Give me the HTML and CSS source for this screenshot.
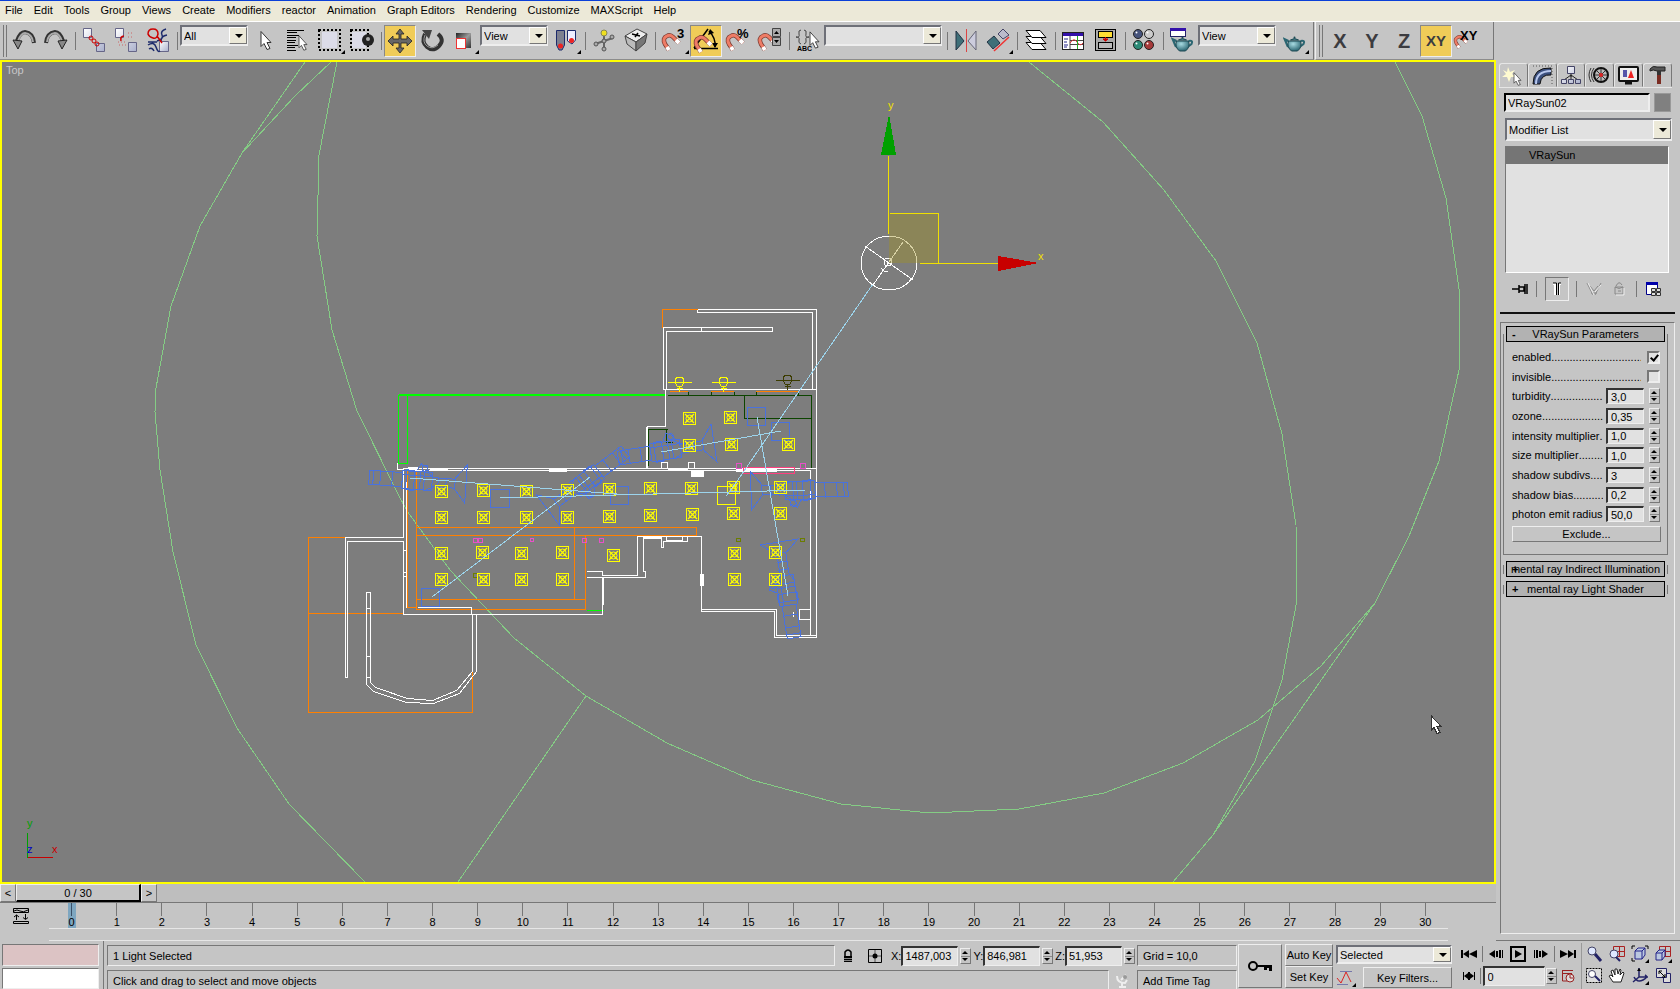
FILE: index.html
```
<!DOCTYPE html>
<html lang="en">
<head>
  <meta charset="UTF-8">
  <meta name="viewport" content="width=device-width, initial-scale=1.0">
  <title>Top viewport</title>
  <link rel="stylesheet" href="styles.css">
</head>
<body>
  <!-- shared shapes -->
  <svg class="defs" width="0" height="0">
    <defs>
      <linearGradient id="metal" x1="0" y1="0" x2="1" y2="1">
        <stop offset="0" stop-color="#222"/><stop offset=".5" stop-color="#999"/><stop offset="1" stop-color="#333"/>
      </linearGradient>
      <linearGradient id="cube" x1="0" y1="0" x2="1" y2="1">
        <stop offset="0" stop-color="#fff"/><stop offset="1" stop-color="#aab0cc"/>
      </linearGradient>
      <radialGradient id="tea" cx=".4" cy=".3" r=".7">
        <stop offset="0" stop-color="#a8dbe2"/><stop offset="1" stop-color="#2b6672"/>
      </radialGradient>
      <symbol id="magnet" viewBox="0 0 32 32">
        <path d="M11 25L7 19Q4 13 9 11Q12 9 15 12L21 18" fill="none" stroke="#7b3a30" stroke-width="4.500"/>
        <path d="M11 25L7 19Q4 13 9 11Q12 9 15 12L21 18" fill="none" stroke="#ee7c66" stroke-width="3"/>
        <path d="M11 25L9 22M21 18L18 15" stroke="#fff" stroke-width="4"/>
      </symbol>
      <symbol id="arrow" viewBox="0 0 12 20">
        <path d="M1 1V16L4 13L7 19L10 18L7 12H11Z" fill="#fff" stroke="#333"/>
      </symbol>
      <symbol id="teapot" viewBox="0 0 22 16">
        <path d="M5 5L1 3L4 10L7 12M17 5Q22 4 20 8L16 11" fill="none" stroke="#2b6672" stroke-width="2"/>
        <path d="M5 5H17Q19 11 14 15H8Q3 11 5 5Z" fill="url(#tea)" stroke="#1e4a54"/>
        <path d="M7 4Q11 1 15 4Z" fill="#5fa3ae" stroke="#1e4a54"/><circle cx="11" cy="1.500" r="1" fill="#1e4a54"/>
      </symbol>
      <symbol id="corner" viewBox="0 0 4 4"><path d="M4 0V4H0Z"/></symbol>
      <symbol id="light" viewBox="0 0 13 13">
        <path d="M.5.5H12.500V12.500H.5Z" fill="none" stroke="#ff0"/>
        <path d="M2 2L11 11M11 2L2 11" fill="none" stroke="#ff0" stroke-width="1.200" shape-rendering="geometricPrecision"/>
        <circle cx="6.500" cy="6.500" r="3.500" fill="none" stroke="#ff0" shape-rendering="geometricPrecision"/>
      </symbol>
      <g id="camera">
        <path d="M-11-5L0-19V19L-11 6ZM-34-4H-11V5H-34ZM-28-5V6M-20-5V5M-64-9H-34V9H-64ZM-60-10H-52V10H-60ZM-46-9V9M-42-9V9M-40-9L-32-4M-40 9L-32 5M-97-7H-64V7H-97ZM-93-7V7M-86-7V7M-74-8V8M-64-5H-34"/>
        <path d="M-50-10L-46-17L-40-14L-38-9M-45-13A3 3 0 1 0-39-13A3 3 0 1 0-45-13"/>
      </g>
      <g id="lamp">
        <path d="M-12 0H12M-4-3L-3-5H3L4-3V1L2 4H-2L-4 1ZM0 4V9M-3 6H3"/>
      </g>
    </defs>
  </svg>

  <nav class="menubar">
    <a href="#">File</a><a href="#">Edit</a><a href="#">Tools</a><a href="#">Group</a><a href="#">Views</a><a href="#">Create</a><a href="#">Modifiers</a><a href="#">reactor</a><a href="#">Animation</a><a href="#">Graph Editors</a><a href="#">Rendering</a><a href="#">Customize</a><a href="#">MAXScript</a><a href="#">Help</a>
  </nav>

  <div class="toolbars">
    <div class="toolbar">
      <span class="grip"></span>
      <button class="tool" aria-label="Undo"><svg viewBox="0 0 32 32"><path d="M26 18Q25 8 17 7Q12 7 9 16" fill="none" stroke="#333" stroke-width="4"/><path d="M25 17Q24 9 17 8Q13 8 10 16" fill="none" stroke="#aaa" stroke-width="2"/><path d="M5 15L14 16L10 24Z" fill="#888" stroke="#222"/></svg></button>
      <button class="tool" aria-label="Redo"><svg viewBox="0 0 32 32"><path d="M6 18Q7 8 15 7Q20 7 23 16" fill="none" stroke="#333" stroke-width="4"/><path d="M7 17Q8 9 15 8Q19 8 22 16" fill="none" stroke="#aaa" stroke-width="2"/><path d="M27 15L18 16L22 24Z" fill="#888" stroke="#222"/></svg></button>
      <span class="sep"></span>
      <button class="tool" aria-label="Link"><svg viewBox="0 0 32 32"><path d="M5.500 3.500H13.500V12.500H5.500ZM18.500 18.500H26.500V26.500H18.500Z" fill="url(#cube)" stroke="#668"/><g fill="none" stroke="#c00"><circle cx="13" cy="13" r="2"/><circle cx="16" cy="16" r="2"/><circle cx="19" cy="19" r="2"/></g></svg></button>
      <button class="tool" aria-label="Unlink"><svg viewBox="0 0 32 32"><path d="M5.500 3.500H13.500V12.500H5.500ZM18.500 17.500H26.500V26.500H18.500Z" fill="url(#cube)" stroke="#668"/><path d="M11 16Q10 11 14 11" fill="none" stroke="#c00" stroke-width="1.500"/><path d="M8 17H15M9 20H16M18 8H23M18 12H24" stroke="#c66" stroke-dasharray="1 2"/></svg></button>
      <button class="tool" aria-label="Bind to Space Warp"><svg viewBox="0 0 32 32"><path d="M17.500 16.500H26.500V26.500H17.500Z" fill="url(#cube)" stroke="#668"/><path d="M24 4Q18 6 20 10T15 16M25 10Q19 11 19 16M6 20Q12 16 14 22T18 26M7 24Q10 22 12 26M6 17H15" fill="none" stroke="#1c2a6b" stroke-width="1.500"/><path d="M6 9Q6 4 11 4T16 9Q15 14 11 13T6 9ZM15 11L20 18" fill="none" stroke="#c00" stroke-width="1.500"/></svg></button>
      <span class="sep"></span>
      <span class="combo w68"><select aria-label="Selection filter"><option>All</option></select></span>
      <button class="tool" aria-label="Select"><svg viewBox="0 0 32 32"><use href="#arrow" x="10" y="5" width="12" height="21"/></svg></button>
      <button class="tool" aria-label="Select by name"><svg viewBox="0 0 32 32"><path d="M5 5.500H22M5 7.500H15M5 10.500H17M5 12.500H14M5 15.500H14M5 17.500H13M5 20.500H16M5 22.500H13M5 25.500H14" stroke="#000"/><use href="#arrow" x="16" y="10" width="10" height="16"/></svg></button>
      <button class="tool" aria-label="Rectangular region"><svg viewBox="0 0 32 32"><rect x="8" y="7" width="15" height="16" fill="#dcdce8"/><rect x="5" y="5" width="21" height="20" fill="none" stroke="#000" stroke-width="2" stroke-dasharray="2 2"/><use href="#corner" x="27" y="25" width="4" height="4"/></svg></button>
      <button class="tool" aria-label="Window crossing"><svg viewBox="0 0 32 32"><rect x="6" y="7" width="14" height="16" fill="#dcdce8"/><rect x="5" y="5" width="17" height="20" fill="none" stroke="#000" stroke-width="2" stroke-dasharray="2 2"/><circle cx="22" cy="15" r="6" fill="#222"/><circle cx="22" cy="14" r="2" fill="#aaa"/></svg></button>
      <span class="sep"></span>
      <button class="tool on" aria-label="Move"><svg viewBox="0 0 32 32"><path d="M16 4L20 9H17V14H23V11L28 16L23 21V18H17V23H20L16 28L12 23H15V18H9V21L4 16L9 11V14H15V9H12Z" fill="#666" stroke="#222" stroke-width=".8"/></svg></button>
      <button class="tool" aria-label="Rotate"><svg viewBox="0 0 32 32"><path d="M9 9Q5 17 11 22T23 21T22 9" fill="none" stroke="#333" stroke-width="4"/><path d="M9 10Q6 17 11 21T22 20" fill="none" stroke="#999"/><path d="M6 5L16 5L13 14Z" fill="#444"/></svg></button>
      <button class="tool" aria-label="Scale"><svg viewBox="0 0 32 32"><rect x="8" y="8" width="15" height="15" fill="url(#metal)"/><rect x="8.500" y="13.500" width="9" height="10" fill="#fff" stroke="#e33"/><use href="#corner" x="27" y="25" width="4" height="4"/></svg></button>
      <span class="combo w68"><select aria-label="Reference coordinate system"><option>View</option></select></span>
      <button class="tool" aria-label="Use pivot center"><svg viewBox="0 0 32 32"><path d="M6.500 5.500H14.500V20L12 25H9L6.500 20Z" fill="#7d8090" stroke="#1c2a6b"/><path d="M17.500 5.500H25.500V15L22 19L17.500 16Z" fill="#eef" stroke="#1c2a6b"/><circle cx="10.500" cy="21" r="2.500" fill="#e22"/><circle cx="21.500" cy="15.500" r="2.500" fill="#e22"/><use href="#corner" x="27" y="25" width="4" height="4"/></svg></button>
      <span class="sep"></span>
      <button class="tool" aria-label="Manipulate"><svg viewBox="0 0 32 32"><path d="M16 8V24M7 19L25 13" stroke="#666" stroke-width="2"/><circle cx="16" cy="8" r="3" fill="#f0e020" stroke="#885"/><g fill="#aaa" stroke="#555"><circle cx="8" cy="19" r="2"/><circle cx="24" cy="12" r="2"/><circle cx="16" cy="24" r="2"/><circle cx="16" cy="16" r="2"/></g></svg></button>
      <button class="tool" aria-label="Keyboard override"><svg viewBox="0 0 32 32"><path d="M5 11L17 4L27 9L16 17Z" fill="#eee" stroke="#444"/><path d="M5 11L16 17V26L7 19Z" fill="#bbb" stroke="#444"/><path d="M16 17L27 9L25 18L16 26Z" fill="#777" stroke="#444"/><path d="M12 9L20 11M15 12L18 8" stroke="#000" stroke-width="1.500"/></svg></button>
      <span class="sep"></span>
      <button class="tool" aria-label="Snaps toggle"><svg viewBox="0 0 32 32"><use href="#magnet"/><text x="19" y="13" class="mark">3</text><use href="#corner" x="27" y="25" width="4" height="4"/></svg></button>
      <button class="tool on" aria-label="Angle snap"><svg viewBox="0 0 32 32"><path d="M4 23.500H28M4 23L18 4M19 6Q26 13 25 22" fill="none" stroke="#000" stroke-width="1.500"/><path d="M18 10L24 8L20 4ZM22 18H28L25 23Z"/><use href="#magnet" x="0" y="2"/></svg></button>
      <button class="tool" aria-label="Percent snap"><svg viewBox="0 0 32 32"><use href="#magnet"/><text x="15" y="13" class="mark">%</text></svg></button>
      <button class="tool" aria-label="Spinner snap"><svg viewBox="0 0 32 32"><use href="#magnet"/><path d="M18.500 3.500H26.500V11.500H18.500ZM18.500 12.500H26.500V20.500H18.500Z" fill="#aaa" stroke="#444"/><path d="M20 9H25L22.500 6ZM20 15H25L22.500 18Z"/></svg></button>
      <span class="sep"></span>
      <button class="tool" aria-label="Edit named selections"><svg viewBox="0 0 32 32"><path d="M9 5Q6 5 7 9T4 12Q8 12 7 15T9 19M12 5Q15 5 14 9T17 12Q13 12 14 15T12 19" fill="none" stroke="#444"/><text x="5" y="26" class="tiny">ABC</text><use href="#arrow" x="17" y="6" width="11" height="18"/></svg></button>
      <span class="combo w118"><select aria-label="Named selection sets"><option></option></select></span>
      <span class="sep"></span>
      <button class="tool" aria-label="Mirror"><svg viewBox="0 0 32 32"><path d="M6 6L14 16L6 25Z" fill="#3f6f78" stroke="#234"/><path d="M26 6L18 16L26 25Z" fill="#ccd" stroke="#667"/><path d="M16.500 4V27" stroke="#d44"/></svg></button>
      <button class="tool" aria-label="Align"><svg viewBox="0 0 32 32"><path d="M5 17L12 11L18 18L11 24Z" fill="#3f6f78" stroke="#234"/><path d="M16 9L21 4L27 10L21 14Z" fill="#bbc" stroke="#446"/><path d="M12 26L27 12" stroke="#e33" stroke-width="1.500"/><use href="#corner" x="27" y="25" width="4" height="4"/></svg></button>
      <span class="sep"></span>
      <button class="tool" aria-label="Layers"><svg viewBox="0 0 32 32"><g fill="#fff" stroke="#000"><path d="M6 17.500H20L26 24.500H12Z"/><path d="M6 11.500H20L26 18.500H12Z"/><path d="M6 5.500H20L26 12.500H12Z"/></g></svg></button>
      <span class="sep"></span>
      <button class="tool" aria-label="Curve editor"><svg viewBox="0 0 32 32"><rect x="4.500" y="7.500" width="21" height="17" fill="#fff" stroke="#222"/><path d="M5 8H25V11H5Z" fill="#31a"/><path d="M12 11V24M12 15.500H25M12 19.500H25" stroke="#444"/><path d="M6 14H10M6 17H9M6 20H10M6 22H9" stroke="#228"/><path d="M12 18Q16 12 19 17T25 18" fill="none" stroke="#d33"/><path d="M19.500 11V24" stroke="#2a2"/></svg></button>
      <button class="tool" aria-label="Schematic view"><svg viewBox="0 0 32 32"><rect x="5.500" y="4.500" width="20" height="21" fill="#aaa" stroke="#000"/><rect x="8.500" y="6.500" width="14" height="6" fill="#fd3" stroke="#000"/><rect x="8.500" y="17.500" width="14" height="6" fill="#bbb" stroke="#000"/><path d="M15.500 12V16M13 14H18L15.500 16Z" fill="#c00" stroke="#c00"/></svg></button>
      <span class="sep"></span>
      <button class="tool" aria-label="Material editor"><svg viewBox="0 0 32 32"><g stroke="#222"><circle cx="10" cy="9" r="4.500" fill="#46537c"/><circle cx="21" cy="9" r="4.500" fill="#ccc"/><circle cx="10" cy="20" r="4.500" fill="#2b8a76"/><circle cx="21" cy="20" r="4.500" fill="#a63a3a"/></g><g fill="#fff"><circle cx="8.500" cy="7.500" r="1"/><circle cx="19.500" cy="7.500" r="1"/><circle cx="8.500" cy="18.500" r="1"/><circle cx="19.500" cy="18.500" r="1"/></g></svg></button>
      <span class="sep"></span>
      <button class="tool" aria-label="Render scene"><svg viewBox="0 0 32 32"><rect x="4.500" y="3.500" width="15" height="8" fill="#fff" stroke="#226"/><path d="M4 3H20V6H4Z" fill="#31a"/><use href="#teapot" x="5" y="11" width="23" height="16"/></svg></button>
      <span class="combo w78"><select aria-label="Render type"><option>View</option></select></span>
      <button class="tool" aria-label="Quick render"><svg viewBox="0 0 32 32"><use href="#teapot" x="5" y="11" width="23" height="16"/><use href="#corner" x="27" y="25" width="4" height="4"/></svg></button>
    </div>
    <div class="toolbar">
      <span class="grip"></span>
      <button class="tool axis">X</button>
      <button class="tool axis">Y</button>
      <button class="tool axis">Z</button>
      <button class="tool axis two on">XY</button>
      <button class="tool" aria-label="Snaps use axis constraints"><svg viewBox="0 0 32 32"><use href="#magnet" x="-1" y="4" width="24" height="24"/><text x="8" y="15" class="mark">XY</text></svg></button>
    </div>
  </div>

  <div class="work">
    <main class="stage">
      <div class="viewport">
        <svg class="scene" viewBox="2 62 1492 820">
          <!-- sun target spheres -->
          <g class="sphere">
            <path d="M331 62L295 96L242 153L200 226L171 306L156 388L155 412L160 470L173 552L196 645L237 728L289 804L365 882M305 62L242 153"/>
            <path d="M337 62L319 155L317 236L332 330L357 411L398 494L407 511L450 570L514 638L586 696L667 743L752 780L841 804L930 813L1019 809L1104 793L1183 763L1258 720L1321 666L1375 603L1409 536L1439 461L1459 370L1459 289L1446 198L1422 116L1395 62"/>
            <path d="M1029 62L1103 122L1164 190L1216 261L1257 343L1282 434L1296 525L1297 600L1282 680L1255 761L1213 835L1173 882M586 696L458 882M1213 835L1375 603"/>
          </g>
          <g class="line orange">
            <path d="M408 469V608H417M417 469V610H586V536M417 528H697V536H417M575 528V600M417 600H586"/>
            <path d="M346 538H309V713H473V672M309 614H404M663 328V310H698M670 392H688M711 392H734M756 392H798"/>
          </g>
          <g class="line dark">
            <path d="M667 395H811V468M744 395V418H811M648 465V429H667M666 429V442H672M688 391V395M711 391V395M734 391V395M756 391V395M798 391V395"/>
          </g>
          <g class="line lime"><path d="M398 463V395H665M398 394H665M407 395V463H398M586 610H603"/></g>
          <!-- walls -->
          <g class="line wall">
            <path d="M698 310H817V638H775V612H702V537M698 310V313H813V390M664 390H817M811 470V636H777V610H702M811 636H817"/>
            <path d="M664 390V328H773V332H667V390M702 328V332M666 390V427H648V468M647 427V468"/>
            <path d="M404 537V469H817M407 471H811M662 468V463H668V468M689 468V463H695V468M398 463V470H404"/>
            <path d="M404 538H346V678H348V542H404M404 542V615H603V578M407 470V608M418 608H472V614M587 572H603V576H638V537H702M603 578H646V572H644V537M587 578H603"/>
            <path d="M662 538V548H664V542H688V537M667 537V541H683V537M811 610H800V620H811M794 612V617"/>
            <path d="M473 614V672L457 691L433 701L408 699L376 688L371 683V593H367V685L374 692L407 703L434 704L460 694L477 672V614M367 609H371M367 657H371M367 678H371M404 551H407M404 573H407M404 577H407"/>
          </g>
          <path class="solid" d="M691 471H704V477H691ZM700 574H704V586H700ZM549 468H567V472H549ZM430 468H448V471H430ZM668 468H688V471H668ZM736 469H777V472H736ZM602 578H604V605H602ZM644 537H662V539H644ZM408 467H418V470H408Z"/>
          <g class="line pink"><path d="M743 467H794V473H743Z"/></g>
          <g class="line magenta"><path d="M736 463H741V468H736ZM800 463H805V468H800ZM473 538H477V542H473ZM478 538H482V542H478ZM530 538H533V541H530ZM582 538H586V542H582ZM599 538H603V542H599Z"/></g>
          <g class="line olive"><path d="M736 538H740V541H736ZM800 538H804V541H800ZM473 573H477V577H473Z"/></g>
          <!-- cameras -->
          <g class="camera">
            <use href="#camera" transform="translate(466 484) rotate(4)"/>
            <use href="#camera" transform="translate(548 510) rotate(143)"/>
            <use href="#camera" transform="translate(714 443) rotate(-9)"/>
            <use href="#camera" transform="translate(751 491) rotate(179)"/>
            <use href="#camera" transform="translate(779 542) rotate(-99)"/>
            <path d="M747 407H765V425H747ZM771 422H789V440H771ZM610 486H628V504H610ZM490 489H509V507H490ZM421 588H439V606H421Z"/>
          </g>
          <!-- fixtures -->
          <g>
            <use href="#light" x="435" y="485" width="13" height="13"/><use href="#light" x="477" y="484" width="13" height="13"/><use href="#light" x="520" y="485" width="13" height="13"/>
            <use href="#light" x="561" y="484" width="13" height="13"/><use href="#light" x="603" y="483" width="13" height="13"/><use href="#light" x="644" y="482" width="13" height="13"/>
            <use href="#light" x="685" y="482" width="13" height="13"/><use href="#light" x="727" y="481" width="13" height="13"/><use href="#light" x="774" y="481" width="13" height="13"/>
            <use href="#light" x="435" y="511" width="13" height="13"/><use href="#light" x="477" y="511" width="13" height="13"/><use href="#light" x="520" y="511" width="13" height="13"/>
            <use href="#light" x="561" y="511" width="13" height="13"/><use href="#light" x="603" y="510" width="13" height="13"/><use href="#light" x="644" y="509" width="13" height="13"/>
            <use href="#light" x="686" y="508" width="13" height="13"/><use href="#light" x="727" y="507" width="13" height="13"/><use href="#light" x="774" y="507" width="13" height="13"/>
            <use href="#light" x="435" y="547" width="13" height="13"/><use href="#light" x="476" y="546" width="13" height="13"/><use href="#light" x="515" y="547" width="13" height="13"/>
            <use href="#light" x="556" y="546" width="13" height="13"/><use href="#light" x="607" y="549" width="13" height="13"/><use href="#light" x="728" y="547" width="13" height="13"/><use href="#light" x="769" y="546" width="13" height="13"/>
            <use href="#light" x="435" y="573" width="13" height="13"/><use href="#light" x="477" y="573" width="13" height="13"/><use href="#light" x="515" y="573" width="13" height="13"/>
            <use href="#light" x="556" y="573" width="13" height="13"/><use href="#light" x="728" y="573" width="13" height="13"/><use href="#light" x="769" y="573" width="13" height="13"/>
            <use href="#light" x="683" y="412" width="13" height="13"/><use href="#light" x="724" y="411" width="13" height="13"/>
            <use href="#light" x="683" y="439" width="13" height="13"/><use href="#light" x="725" y="438" width="13" height="13"/><use href="#light" x="782" y="438" width="13" height="13"/>
          </g>
          <g class="line lamp"><use href="#lamp" x="679" y="382"/><use href="#lamp" x="723" y="382"/><path d="M717 486H735V504H717Z"/></g>
          <g class="line lamp off"><use href="#lamp" x="787" y="380"/></g>
          <g class="aim"><path d="M410 478L630 495M500 498L806 490M590 477L432 597M661 452L781 431M757 417L788 596M873 284L733 487L726 496"/></g>
          <!-- selected sun and move gizmo -->
          <g class="sun">
            <ellipse cx="889" cy="263" rx="28" ry="27"/><circle cx="888" cy="262" r="4"/>
            <path d="M865 246L913 280M903 242L873 285M881 268L884 271H888"/>
          </g>
          <path d="M889 213H939V263H889Z" fill="#a09020" fill-opacity=".4"/>
          <g class="line gizmo"><path d="M888 155V233M889 213H938V263M919 263H998"/></g>
          <path d="M889 114L896 155H881Z" fill="#00a000"/>
          <path d="M1039 263L998 256V271Z" fill="#c80000"/>
          <text x="888" y="109" class="axis-y">y</text>
          <text x="1038" y="260" class="axis-y">x</text>
          <!-- world axis tripod -->
          <path class="line" d="M27 857V832" stroke="#00a000"/><path class="line" d="M27 857H52" stroke="#c80000"/>
          <text x="27" y="827" fill="#00a000">y</text><text x="27" y="853" fill="#0000c8">z</text><text x="52" y="853" fill="#c80000">x</text>
          <text x="6" y="74" class="view-name">Top</text>
          <use href="#arrow" x="1430" y="714" width="12" height="21"/>
        </svg>
      </div>

      <div class="slider">
        <button class="step">&lt;</button>
        <button class="thumb">0 / 30</button>
        <button class="step">&gt;</button>
      </div>

      <div class="trackbar">
        <button class="mini" aria-label="Open mini curve editor"><svg viewBox="0 0 20 20"><path d="M2.500 2.500H17.500V6.500H2.500ZM2.500 15.500H17.500V17.500H2.500ZM5.500 9V14M14.500 8V13M3 11L5.500 9L8 11M12 11.500L14.500 13.500L17 11.500" fill="none" stroke="#000"/><path d="M3 5Q6 3 9 5T17 4" fill="none" stroke="#000"/></svg></button>
        <div class="ticks">
          <span class="now">0</span><span>1</span><span>2</span><span>3</span><span>4</span><span>5</span><span>6</span><span>7</span><span>8</span><span>9</span><span>10</span><span>11</span><span>12</span><span>13</span><span>14</span><span>15</span><span>16</span><span>17</span><span>18</span><span>19</span><span>20</span><span>21</span><span>22</span><span>23</span><span>24</span><span>25</span><span>26</span><span>27</span><span>28</span><span>29</span><span>30</span>
        </div>
      </div>
    </main>

    <aside class="panel">
      <div class="tabs">
        <button aria-label="Create"><svg viewBox="0 0 26 22"><path d="M8 3L10 8L15 6L12 10L16 13L11 13L9 18L7 13L2 13L6 10L3 6L7 8Z" fill="#fffbd0"/><use href="#arrow" x="13" y="8" width="9" height="14"/></svg></button>
        <button class="active" aria-label="Modify"><svg viewBox="0 0 26 22"><path d="M4 20Q4 3 22 4V11Q12 10 11 20Z" fill="#3b4f7c" stroke="#111"/><path d="M7 20Q7 7 22 7" fill="none" stroke="#b8c8ee" stroke-width="2"/><path d="M4 2H23V20" fill="none" stroke="#555" stroke-dasharray="1 2"/></svg></button>
        <button aria-label="Hierarchy"><svg viewBox="0 0 26 22"><path d="M13 9V13M13 11L6 16M13 11L20 16M13 11V16" stroke="#222"/><path d="M9.500 2.500H16.500V9.500H9.500ZM3.500 15.500H8.500V19.500H3.500ZM10.500 15.500H15.500V19.500H10.500ZM17.500 15.500H22.500V19.500H17.500Z" fill="url(#cube)" stroke="#446"/></svg></button>
        <button aria-label="Motion"><svg viewBox="0 0 26 22"><circle cx="15" cy="11" r="7" fill="#bbb" stroke="#111" stroke-width="2"/><path d="M15 5V17M9 11H21M11 7L19 15M19 7L11 15" stroke="#333"/><circle cx="15" cy="11" r="2" fill="#d22"/><path d="M5 4Q1 11 5 18M8 4Q3 11 8 18" fill="none" stroke="#333"/></svg></button>
        <button aria-label="Display"><svg viewBox="0 0 26 22"><rect x="4" y="3" width="19" height="14" rx="1" fill="#eee" stroke="#111" stroke-width="2"/><path d="M8 6H12V13H8Z" fill="#55a"/><path d="M13 14L16 6L19 14Z" fill="#e22"/><path d="M10 19H17" stroke="#111" stroke-width="3"/></svg></button>
        <button aria-label="Utilities"><svg viewBox="0 0 26 22"><path d="M6 5Q9 1 13 3H21V7H13Q9 5 6 7Z" fill="#555" stroke="#222"/><path d="M13 7H17V12H13Z" fill="#333"/><path d="M13 11H17V20H13Z" fill="#7a2c22"/></svg></button>
      </div>
      <div class="name">
        <input type="text" value="VRaySun02" aria-label="Object name">
        <button class="swatch" aria-label="Object color"></button>
      </div>
      <span class="combo wide"><select aria-label="Modifier list"><option>Modifier List</option></select></span>
      <ul class="stack"><li>VRaySun</li></ul>
      <div class="stack-tools">
        <button aria-label="Pin stack"><svg viewBox="0 0 18 18"><path d="M1 9H8M8 5V13M8 7H13V11H8M14 4V14M16 4V14" stroke="#000" fill="none" stroke-width="1.500"/></svg></button>
        <i></i>
        <button class="pressed" aria-label="Show end result"><svg viewBox="0 0 18 18"><path d="M5 3H8V15H6V5H5ZM13 3H10V15H12V5H13Z" fill="#fff"/><path d="M5 3H8.500V15M13 3H10.500V15" fill="none" stroke="#000"/></svg></button>
        <i></i>
        <button aria-label="Make unique"><svg viewBox="0 0 18 18"><path d="M2 3L8 15M16 3L10 15M5 6L9 11L13 6M6 13H12" fill="none" stroke="#888"/><path d="M3 3L9 15M10 12L16 5" stroke="#eee"/></svg></button>
        <button aria-label="Remove modifier"><svg viewBox="0 0 18 18"><path d="M5 7H13V14H5ZM5 7Q9 10 13 7M6 6Q9 0 12 5M8 11H11" fill="none" stroke="#888"/><path d="M6 15H14V8" fill="none" stroke="#eee"/></svg></button>
        <i></i>
        <button aria-label="Configure sets"><svg viewBox="0 0 18 18"><path d="M2.500 2.500H13.500V14.500H2.500Z" fill="#fff" stroke="#008"/><path d="M2 2H14V5H2Z" fill="#00a"/><path d="M7.500 8.500H11.500V11.500H7.500ZM12.500 8.500H16.500V11.500H12.500ZM7.500 12.500H11.500V15.500H7.500ZM12.500 12.500H16.500V15.500H12.500Z" fill="#ddd" stroke="#333"/></svg></button>
      </div>
      <hr>
      <div class="rollouts">
        <section class="rollout open">
          <button class="head"><b>-</b><span>VRaySun Parameters</span></button>
          <div class="params">
            <label for="enabled"><span>enabled</span></label><input type="checkbox" id="enabled" checked>
            <label for="invisible"><span>invisible</span></label><input type="checkbox" id="invisible">
            <label for="turbidity"><span>turbidity</span></label><input type="text" id="turbidity" value="3,0"><span class="spin"></span>
            <label for="ozone"><span>ozone</span></label><input type="text" id="ozone" value="0,35"><span class="spin"></span>
            <label for="intensity"><span>intensity multiplier</span></label><input type="text" id="intensity" value="1,0"><span class="spin"></span>
            <label for="size"><span>size multiplier</span></label><input type="text" id="size" value="1,0"><span class="spin"></span>
            <label for="subdivs"><span>shadow subdivs</span></label><input type="text" id="subdivs" value="3"><span class="spin"></span>
            <label for="bias"><span>shadow bias</span></label><input type="text" id="bias" value="0,2"><span class="spin"></span>
            <label for="photon"><span>photon emit radius</span></label><input type="text" id="photon" value="50,0"><span class="spin"></span>
            <button class="exclude">Exclude...</button>
          </div>
        </section>
        <section class="rollout"><button class="head"><b>+</b><span>mental ray Indirect Illumination</span></button></section>
        <section class="rollout"><button class="head"><b>+</b><span>mental ray Light Shader</span></button></section>
      </div>
    </aside>
  </div>

  <footer class="bottom">
    <div class="listener">
      <input type="text" class="macro" aria-label="Macro recorder">
      <input type="text" aria-label="Script listener">
    </div>
    <div class="status">
      <div class="row">
        <p class="field grow">1 Light Selected</p>
        <button class="icon lock" aria-label="Selection lock"><svg viewBox="0 0 16 16"><path d="M5 8V4Q8 0 11 4V8" fill="none" stroke="#000" stroke-width="1.500"/><path d="M4 8H12V14H4Z"/><path d="M4 10.500H12M4 12.500H12" stroke="#bbb" stroke-width=".7"/></svg></button>
        <button class="icon" aria-label="Absolute mode"><svg viewBox="0 0 16 16"><path d="M1.500 1.500H14.500V14.500H1.500Z" fill="none" stroke="#000"/><path d="M8 2V14M2 8H14" stroke="#555"/><circle cx="8" cy="8" r="2.500"/></svg></button>
        <label class="coord">X:<input type="text" value="1487,003"></label><span class="spin"></span>
        <label class="coord">Y:<input type="text" value="846,981"></label><span class="spin"></span>
        <label class="coord">Z:<input type="text" value="51,953"></label><span class="spin"></span>
        <p class="field side">Grid = 10,0</p>
      </div>
      <div class="row">
        <p class="field grow">Click and drag to select and move objects</p>
        <button class="icon comm" aria-label="Communication center"><svg viewBox="0 0 16 16"><path d="M3 3Q3 10 11 10L13 7M7 7L12 2M8 10V14M5 14H12" fill="none" stroke="#eee" stroke-width="2"/><circle cx="11" cy="4" r="2" fill="#999"/></svg></button>
        <button class="field side">Add Time Tag</button>
      </div>
    </div>
    <button class="raised key" aria-label="Set keys"><svg viewBox="0 0 24 12"><circle cx="5" cy="6" r="4" fill="none" stroke="#000" stroke-width="2"/><path d="M9 5H24V11H21V8H19V10H16V7H9Z"/></svg></button>
    <div class="keys">
      <button class="raised">Auto Key</button>
      <button class="raised">Set Key</button>
    </div>
    <div class="filters">
      <span class="combo wide"><select aria-label="Key selection"><option>Selected</option></select></span>
      <div class="row">
        <button class="icon tangent" aria-label="Default tangents"><svg viewBox="0 0 20 18"><path d="M4 2.500H16M1 15.500H12" stroke="#77a"/><path d="M1 9L5 14L10 3L15 13" fill="none" stroke="#d22"/><use href="#corner" x="16" y="14" width="4" height="4"/></svg></button>
        <button class="raised grow">Key Filters...</button>
      </div>
    </div>
    <div class="play">
      <div class="row">
        <button aria-label="Go to start"><svg viewBox="0 0 18 16"><path d="M1 4H3V12H1ZM3 8L9 4V12ZM9 8L17 4V12Z"/></svg></button><i></i>
        <button aria-label="Previous frame"><svg viewBox="0 0 18 16"><path d="M2 8L8 4V12ZM9 5H11V11H9ZM12 4H14V12H12ZM15 4H16V12H15Z"/></svg></button>
        <button aria-label="Play"><svg viewBox="0 0 18 16"><path d="M2 1H16V15H2Z" fill="none" stroke="#000" stroke-width="2"/><path d="M6 4L13 8L6 12Z"/></svg></button>
        <button aria-label="Next frame"><svg viewBox="0 0 18 16"><path d="M16 8L10 4V12ZM7 5H9V11H7ZM4 4H6V12H4ZM2 4H3V12H2Z"/></svg></button><i></i>
        <button aria-label="Go to end"><svg viewBox="0 0 18 16"><path d="M17 4H15V12H17ZM15 8L9 4V12ZM9 8L1 4V12Z"/></svg></button>
      </div>
      <div class="row">
        <button aria-label="Key mode"><svg viewBox="0 0 18 16"><path d="M3 4H4V12H3ZM4 8L8 5V11ZM14 4H15V12H14ZM14 8L10 5V11ZM8 4H10V12H8Z"/></svg></button><i></i>
        <input type="text" value="0" aria-label="Current frame"><span class="spin"></span>
        <button aria-label="Time configuration"><svg viewBox="0 0 18 16"><path d="M3 2.500H14M3.500 2V13H8M3 5.500H13" fill="none" stroke="#922"/><circle cx="11" cy="10" r="4" fill="#ddd" stroke="#922"/><path d="M11 7V10H14" fill="none" stroke="#922"/></svg></button>
      </div>
    </div>
    <div class="nav">
      <button aria-label="Zoom"><svg viewBox="0 0 18 18"><circle cx="7" cy="6" r="4" fill="#dfe8ff" stroke="#446"/><path d="M10 9L16 16" stroke="#226" stroke-width="3"/></svg></button>
      <button aria-label="Zoom all"><svg viewBox="0 0 18 18"><path d="M5.500 1.500H16.500V11.500H5.500ZM11.500 1V12M5 6.500H17" fill="none" stroke="#a22"/><circle cx="6" cy="9" r="4" fill="#dfe8ff" stroke="#446"/><path d="M8 12L12 16" stroke="#226" stroke-width="2"/></svg></button>
      <button aria-label="Zoom extents"><svg viewBox="0 0 18 18"><path d="M1 4V1H4M14 1H17V4M1 13V16H4" fill="none" stroke="#000"/><path d="M4 6H11V14H4ZM4 6L7 3H14V10L11 14M11 6L14 3" fill="#bbc8e0" stroke="#228"/><use href="#corner" x="14" y="14" width="4" height="4"/></svg></button>
      <button aria-label="Zoom extents all"><svg viewBox="0 0 18 18"><path d="M5.500 1.500H16.500V11.500H5.500ZM11.500 1V12M5 6.500H17" fill="none" stroke="#a22"/><path d="M2 8H8V15H2ZM2 8L5 5H11V11L8 15M8 8L11 5" fill="#bbc8e0" stroke="#228"/><use href="#corner" x="14" y="14" width="4" height="4"/></svg></button>
      <button aria-label="Region zoom"><svg viewBox="0 0 18 18"><rect x="1.500" y="1.500" width="15" height="14" fill="#ddd" stroke="#000" stroke-dasharray="2 1"/><circle cx="7" cy="7" r="3.500" fill="#fff" stroke="#446"/><path d="M10 9L15 14" stroke="#226" stroke-width="2"/></svg></button>
      <button aria-label="Pan"><svg viewBox="0 0 18 18"><path d="M5 15L1 9L3 8L5 10L3 4L5 3L7 8V2H9L10 7L12 2L13 3L12 8L15 5L16 6L13 15Z" fill="#fff" stroke="#222"/></svg></button>
      <button aria-label="Arc rotate"><svg viewBox="0 0 18 18"><path d="M8 1V10L2 15M8 10H17M3 10Q6 16 12 13T14 8" fill="none" stroke="#226" stroke-width="1.500"/><path d="M6 4L8 1L10 4Z"/><use href="#corner" x="14" y="14" width="4" height="4"/></svg></button>
      <button aria-label="Maximize viewport"><svg viewBox="0 0 18 18"><path d="M2.500 1.500H12.500V10.500H2.500ZM9.500 10V15.500H16.500V6.500H13" fill="#ddd" stroke="#226"/><path d="M5 4L11 10M5 7V4H8M11 7V10H8" fill="none" stroke="#000"/></svg></button>
    </div>
  </footer>
</body>
</html>
```
FILE: styles.css
```
*{
  box-sizing:border-box;
}
body{
  margin:0;
  height:100vh;
  display:flex;
  flex-direction:column;
  overflow:hidden;
  background:#c5c5c5;
  color:#000;
  font:11px/14px "Liberation Sans", Arial, sans-serif;
}
button, input, select{
  font:inherit;
  color:inherit;
  margin:0;
  padding:0;
  border:0;
  border-radius:0;
  background:none;
  appearance:none;
}
p, ul{
  margin:0;
  padding:0;
  list-style:none;
}
svg{
  display:block;
}
.defs{
  position:absolute;
}

/* menu */
.menubar{
  display:flex;
  gap:11px;
  height:22px;
  padding:2px 5px 0;
  border-top:1px solid #0a3fd8;
  border-bottom:1px solid #fff;
  background:#ece9d8;
}
.menubar a{
  color:#000;
  text-decoration:none;
}

/* toolbars */
.toolbars{
  display:flex;
  height:38px;
}
.toolbar{
  display:flex;
  align-items:flex-start;
  padding:3px 3px 0 0;
  border-right:1px solid #777;
  border-bottom:1px solid #8c8c8c;
  margin-right:1px;
}
.toolbar + .toolbar{
  border-left:1px solid #eee;
  padding-right:9px;
}
.grip{
  width:4px;
  height:32px;
  margin:0 1px 0 3px;
  border-left:1px solid #777;
  border-right:1px solid #777;
}
.tool{
  width:32px;
  height:32px;
}
.tool svg{
  width:32px;
  height:32px;
}
.tool.on{
  background:#f0cc58;
  border:1px solid;
  border-color:#888 #eee #eee #888;
}
.tool.on svg{
  margin:-1px;
}
.tool.axis{
  font:bold 20px/30px "Liberation Sans", Arial, sans-serif;
  color:#3c3c40;
}
.tool.two{
  font-size:15px;
}
.mark{
  font:bold 13px "Liberation Sans", Arial, sans-serif;
}
.tiny{
  font:bold 7px "Liberation Sans", Arial, sans-serif;
}
.sep{
  width:6px;
  height:18px;
  margin-top:7px;
  background:linear-gradient(#777,#777) 3px 0/1px 100% no-repeat;
}

/* drop-downs */
.combo{
  position:relative;
  display:block;
  height:21px;
  margin-right:2px;
}
.combo select{
  width:100%;
  height:100%;
  padding:0 20px 0 2px;
  border:2px solid;
  border-color:#6e7078 #eee #eee #6e7078;
  background:#e1e1e1;
}
.combo::before{
  content:"";
  position:absolute;
  right:1px;
  top:2px;
  bottom:2px;
  width:16px;
  background:#ece9d8;
  border:1px solid;
  border-color:#fff #777 #777 #fff;
  pointer-events:none;
}
.combo::after{
  content:"";
  position:absolute;
  right:5px;
  top:9px;
  border:4px solid transparent;
  border-top-color:#000;
  border-bottom:0;
  pointer-events:none;
}
.w68{
  width:68px;
}
.w78{
  width:78px;
}
.w118{
  width:118px;
}
.wide{
  margin:0;
}

/* work area */
.work{
  flex:1;
  min-height:0;
  display:grid;
  grid-template-columns:1fr 184px;
}
.stage{
  display:flex;
  flex-direction:column;
  min-height:0;
}
.viewport{
  flex:1;
  min-height:0;
  border:2px solid #ff0;
  background:#7d7d7d;
}
.scene{
  width:100%;
  height:100%;
  font:11px "Liberation Sans", Arial, sans-serif;
  fill:none;
  shape-rendering:crispEdges;
}
.line{
  transform:translate(.5px,.5px);
}
.wall, .orange{
  transform:translate(-.5px,-.5px);
}
.sphere{ stroke:#84cc84; }
.wall{ stroke:#fff; }
.solid{ fill:#fff; }
.orange{ stroke:#ff8000; }
.lime{ stroke:#0f0; }
.dark{ stroke:#0c4400; }
.pink{ stroke:#ff4080; }
.magenta{ stroke:#e850c8; }
.olive{ stroke:#6b7d00; }
.camera{ stroke:#4a72dc; }
.lamp{ stroke:#ff0; }
.lamp.off{ stroke:#3c3c00; }
.aim{ stroke:#9cd4ec; }
.sun{ stroke:#fff; }
.gizmo{ stroke:#f0e000; }
.axis-y{ fill:#f0e000; }
.view-name{ fill:#c8c8c8; }

/* time slider */
.slider{
  display:flex;
  height:18px;
  background:#bebebe;
}
.slider button{
  background:#c5c5c5;
  border:1px solid;
  border-color:#eee #777 #777 #eee;
}
.step{
  width:16px;
}
.slider .thumb{
  width:125px;
  border-color:#eee #000 #000 #eee;
  border-width:1px 2px 2px 1px;
}
.trackbar{
  display:flex;
  height:39px;
  padding-right:48px;
  border-top:1px solid #777;
}
.mini{
  width:49px;
  height:26px;
}
.mini svg{
  width:20px;
  height:20px;
  margin-left:11px;
}
.ticks{
  flex:1;
  display:flex;
  border-bottom:1px solid #e6e6e6;
}
.ticks span{
  flex:1;
  width:0;
  height:26px;
  padding-top:12px;
  text-align:center;
  border-bottom:1px solid #e6e6e6;
  background:linear-gradient(#777,#777) 50% 0/1px 13px no-repeat;
}
.ticks .now{
  background:linear-gradient(#3a5068,#3a5068) 50% 0/1px 13px no-repeat, linear-gradient(#7ea6c0,#7ea6c0) 50% 0/8px 100% no-repeat;
}

/* command panel */
.panel{
  display:flex;
  flex-direction:column;
  padding:3px 5px 6px 4px;
  border-bottom:1px solid #777;
}
.tabs{
  display:flex;
  height:25px;
  margin:0 3px 5px -1px;
  border-bottom:1px solid #e6e6e6;
}
.tabs button{
  flex:1;
  border:1px solid;
  border-color:#e6e6e6 #777 transparent #e6e6e6;
  border-radius:3px 3px 0 0;
}
.tabs svg{
  width:26px;
  height:22px;
}
.name{
  display:flex;
  gap:4px;
  height:19px;
  margin:0 4px 6px 4px;
}
.name input{
  flex:1;
  min-width:0;
  padding-left:2px;
  background:#e1e1e1;
  border:2px solid;
  border-color:#000 #eee #eee #000;
}
.swatch{
  width:17px;
  background:#808080;
  border:1px solid #999;
}
.panel > .combo{
  height:23px;
  margin:0 3px 5px 5px;
}
.panel > .combo::after{
  top:10px;
}
.stack{
  height:127px;
  margin:0 6px 0 5px;
  background:#e1e1e1;
  border:1px solid;
  border-color:#777 #fff #fff #777;
}
.stack li{
  height:17px;
  padding:1px 0 0 23px;
  background:#757575;
}
.stack-tools{
  display:flex;
  align-items:center;
  justify-content:space-between;
  height:25px;
  margin:3px 13px 11px 11px;
}
.stack-tools i, .play i{
  width:1px;
  height:16px;
  background:#777;
}
.stack-tools svg{
  width:18px;
  height:18px;
}
.stack-tools .pressed{
  padding:2px;
  border:1px solid;
  border-color:#777 #eee #eee #777;
}
.panel hr{
  width:100%;
  height:2px;
  margin:0 0 8px;
  border:0;
  background:#111;
}
.rollouts{
  flex:1;
  padding:3px 6px 0 2px;
  border:1px solid;
  border-color:#777 #eee #eee #777;
}
.rollout{
  margin-bottom:4px;
  padding:0 3px;
  background:linear-gradient(#777,#777) 0 4px/1px 9px no-repeat, linear-gradient(#777,#777) 100% 4px/1px 9px no-repeat;
}
.rollout.open{
  background:none;
  margin-bottom:6px;
}
.head{
  position:relative;
  display:block;
  width:100%;
  height:16px;
  border:1px solid #000;
  background:#b2b2b2;
  white-space:nowrap;
}
.head b{
  position:absolute;
  left:5px;
}
.params{
  display:grid;
  grid-template-columns:1fr 38px 17px;
  grid-auto-rows:20px 19px 20px;
  align-items:center;
  margin:-8px -3px 0;
  padding:13px 6px 10px 8px;
  border:1px solid #777;
  border-top:0;
}
.params label{
  display:flex;
  min-width:0;
  overflow:hidden;
  margin-right:3px;
}
.params label::after{
  content:"..........................................";
  flex:1;
  width:0;
  overflow:hidden;
}
.params label span{
  white-space:nowrap;
}
.params input[type="text"]{
  width:38px;
  height:16px;
  padding-left:3px;
}
.params input[type="text"], .coord input, .play input{
  background:#e1e1e1;
  border:2px solid;
  border-color:#333 #eee #eee #333;
  border-right-width:1px;
  border-bottom-width:1px;
}
.params input[type="checkbox"]{
  grid-column:3;
  width:13px;
  height:13px;
  margin-left:3px;
  background:#e1e1e1;
  border:2px solid;
  border-color:#777 #eee #eee #777;
}
.params label:has(+ [type="checkbox"]){
  grid-column:1/3;
}
.params input[type="checkbox"]:checked::after{
  content:"";
  display:block;
  width:3px;
  height:6px;
  margin:0 0 0 3px;
  border:solid #000;
  border-width:0 2px 2px 0;
  rotate:40deg;
}
.spin{
  position:relative;
  width:11px;
  height:16px;
  margin-left:2px;
  border:1px solid;
  border-color:#eee #777 #777 #eee;
  background:linear-gradient(#888,#888) 0 7px/100% 1px no-repeat;
}
.spin::before, .spin::after{
  content:"";
  position:absolute;
  left:1px;
  top:2px;
  border:solid transparent;
  border-width:0 3px 3px;
  border-bottom-color:#000;
}
.spin::after{
  top:9px;
  border-width:3px 3px 0;
  border-top-color:#000;
}
.params .spin{
  margin-left:5px;
}
.exclude{
  grid-column:1/4;
  height:16px;
  border:1px solid;
  border-color:#eee #777 #777 #eee;
}

/* status bar */
.bottom{
  display:flex;
  height:48px;
}
.listener{
  display:flex;
  flex-direction:column;
  gap:2px;
  width:104px;
  padding:3px 4px 0 2px;
  border-right:1px solid #777;
}
.listener input{
  width:97px;
  height:22px;
  background:#fff;
  border:1px solid;
  border-color:#777 #eee #eee #777;
}
.listener .macro{
  background:#dcc3c4;
}
.status{
  flex:1;
  min-width:0;
  padding:4px 1px 0 3px;
}
.row{
  display:flex;
  align-items:center;
}
.status .row{
  height:21px;
  margin-bottom:4px;
}
.field{
  height:21px;
  padding:3px 5px;
  border:1px solid;
  border-color:#777 #eee #eee #777;
  text-align:left;
}
.grow{
  flex:1;
}
.side{
  width:100px;
  margin-left:2px;
}
.icon{
  width:16px;
  height:16px;
}
.lock{
  margin:0 11px 0 5px;
}
.coord{
  display:flex;
  align-items:center;
  margin-left:2px;
}
.icon + .coord{
  margin-left:8px;
}
.coord input{
  width:57px;
  height:20px;
  padding-left:2px;
}
.comm{
  margin:0 5px;
}
.raised{
  border:1px solid;
  border-color:#eee #777 #777 #eee;
}
.key{
  width:44px;
  height:44px;
  margin:3px 3px 0 0;
}
.key svg{
  width:24px;
  height:12px;
  margin:auto;
}
.keys{
  display:flex;
  flex-direction:column;
  width:48px;
  padding-top:3px;
}
.keys button{
  height:22px;
  white-space:nowrap;
}
.filters{
  width:116px;
  margin:4px 8px 0 3px;
}
.filters .combo{
  height:19px;
}
.filters .combo::after{
  top:8px;
}
.filters .row{
  margin-top:3px;
}
.filters .raised{
  height:21px;
}
.tangent{
  width:20px;
  height:18px;
  margin-right:7px;
}
.play{
  width:117px;
  margin-right:4px;
}
.play .row{
  height:22px;
  justify-content:space-between;
}
.play .row:first-child{
  margin-top:2px;
}
.play button, .play svg{
  width:18px;
  height:16px;
}
.play .spin{
  margin-left:0;
}
.play input{
  width:62px;
  height:20px;
  padding-left:3px;
}
.nav{
  display:grid;
  grid-template-columns:repeat(4,23px);
  grid-auto-rows:22px;
  margin:2px 6px 0 0;
  border-left:1px solid #999;
}
.nav svg{
  width:18px;
  height:18px;
  margin:auto;
}
```
